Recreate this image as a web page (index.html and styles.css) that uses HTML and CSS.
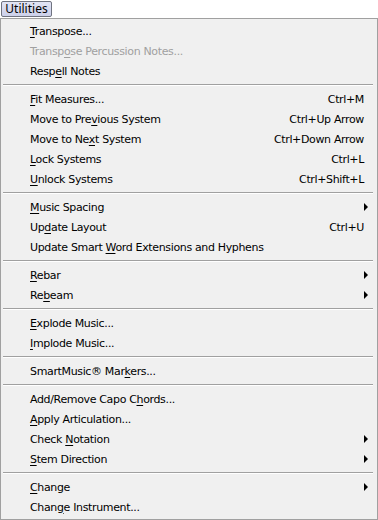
FILE: index.html
```html
<!DOCTYPE html>
<html lang="en">
<head>
  <meta charset="UTF-8">
  <title>Utilities menu</title>
  <link rel="stylesheet" href="styles.css">
</head>
<body>

  <div class="bar">
    <span class="top-btn">Utilities</span>
  </div>

  <div class="menu">
    <div class="item"><span class="label"><u>T</u>ranspose...</span></div>
    <div class="item disabled"><span class="label">Transp<u>o</u>se Percussion Notes...</span></div>
    <div class="item"><span class="label">Resp<u>e</u>ll Notes</span></div>
    <div class="sep"></div>

    <div class="item"><span class="label"><u>F</u>it Measures...</span><span class="key">Ctrl+M</span></div>
    <div class="item"><span class="label">Move to Pre<u>v</u>ious System</span><span class="key">Ctrl+Up Arrow</span></div>
    <div class="item"><span class="label">Move to Ne<u>x</u>t System</span><span class="key">Ctrl+Down Arrow</span></div>
    <div class="item"><span class="label"><u>L</u>ock Systems</span><span class="key">Ctrl+L</span></div>
    <div class="item"><span class="label"><u>U</u>nlock Systems</span><span class="key">Ctrl+Shift+L</span></div>
    <div class="sep"></div>

    <div class="item"><span class="label"><u>M</u>usic Spacing</span><span class="arrow"></span></div>
    <div class="item"><span class="label">Up<u>d</u>ate Layout</span><span class="key">Ctrl+U</span></div>
    <div class="item"><span class="label">Update Smart <u>W</u>ord Extensions and Hyphens</span></div>
    <div class="sep"></div>

    <div class="item"><span class="label"><u>R</u>ebar</span><span class="arrow"></span></div>
    <div class="item"><span class="label">Re<u>b</u>eam</span><span class="arrow"></span></div>
    <div class="sep"></div>

    <div class="item"><span class="label"><u>E</u>xplode Music...</span></div>
    <div class="item"><span class="label"><u>I</u>mplode Music...</span></div>
    <div class="sep"></div>

    <div class="item"><span class="label">SmartMusic&reg; Mar<u>k</u>ers...</span></div>
    <div class="sep"></div>

    <div class="item"><span class="label">Add/Remove Capo C<u>h</u>ords...</span></div>
    <div class="item"><span class="label"><u>A</u>pply Articulation...</span></div>
    <div class="item"><span class="label">Check <u>N</u>otation</span><span class="arrow"></span></div>
    <div class="item"><span class="label"><u>S</u>tem Direction</span><span class="arrow"></span></div>
    <div class="sep"></div>

    <div class="item"><span class="label"><u>C</u>hange</span><span class="arrow"></span></div>
    <div class="item"><span class="label">Chan<u>g</u>e Instrument...</span></div>
  </div>

</body>
</html>
```

FILE: styles.css
```css
:root {
  --menu-bg: #f0f0f0;
  --edge: #a0a0a0;
  --text: #000;
}

body {
  margin: 0;
  background: #fff;
  font-family: "DejaVu Sans", sans-serif;
  font-size: 11px;
  letter-spacing: -0.35px;
  color: var(--text);
}

.bar {
  height: 18px;
  padding: 1px 0 0 1px;
  box-sizing: border-box;
}

.top-btn {
  display: inline-block;
  width: 51px;
  height: 16px;
  line-height: 14px;
  text-align: center;
  box-sizing: border-box;
  border: 1px solid #6f7380;
  border-radius: 2px;
  background: linear-gradient(#e2e4f4, #ccd0ea);
  font-family: "Noto Sans", sans-serif;
  font-size: 12px;
  letter-spacing: 0;
}

.menu {
  width: 378px;
  height: 502px;
  box-sizing: border-box;
  border: 1px solid var(--edge);
  background: var(--menu-bg);
  padding: 2px 0;
}

.item {
  display: flex;
  align-items: center;
  height: 20px;
  padding: 0 9px 0 29px;
}

.item .label {
  flex: 1;
  white-space: nowrap;
}

.item u {
  text-decoration: underline;
  text-underline-offset: 2px;
}

.item .key {
  margin-right: 4px;
  white-space: nowrap;
}

.item .arrow {
  width: 0;
  height: 0;
  border-top: 4px solid transparent;
  border-bottom: 4px solid transparent;
  border-left: 4px solid #000;
}

.disabled { color: var(--edge); }

.sep {
  height: 0;
  margin: 3px 4px 3px 2px;
  border-top: 1px solid var(--edge);
  border-bottom: 1px solid #fff;
}
```
